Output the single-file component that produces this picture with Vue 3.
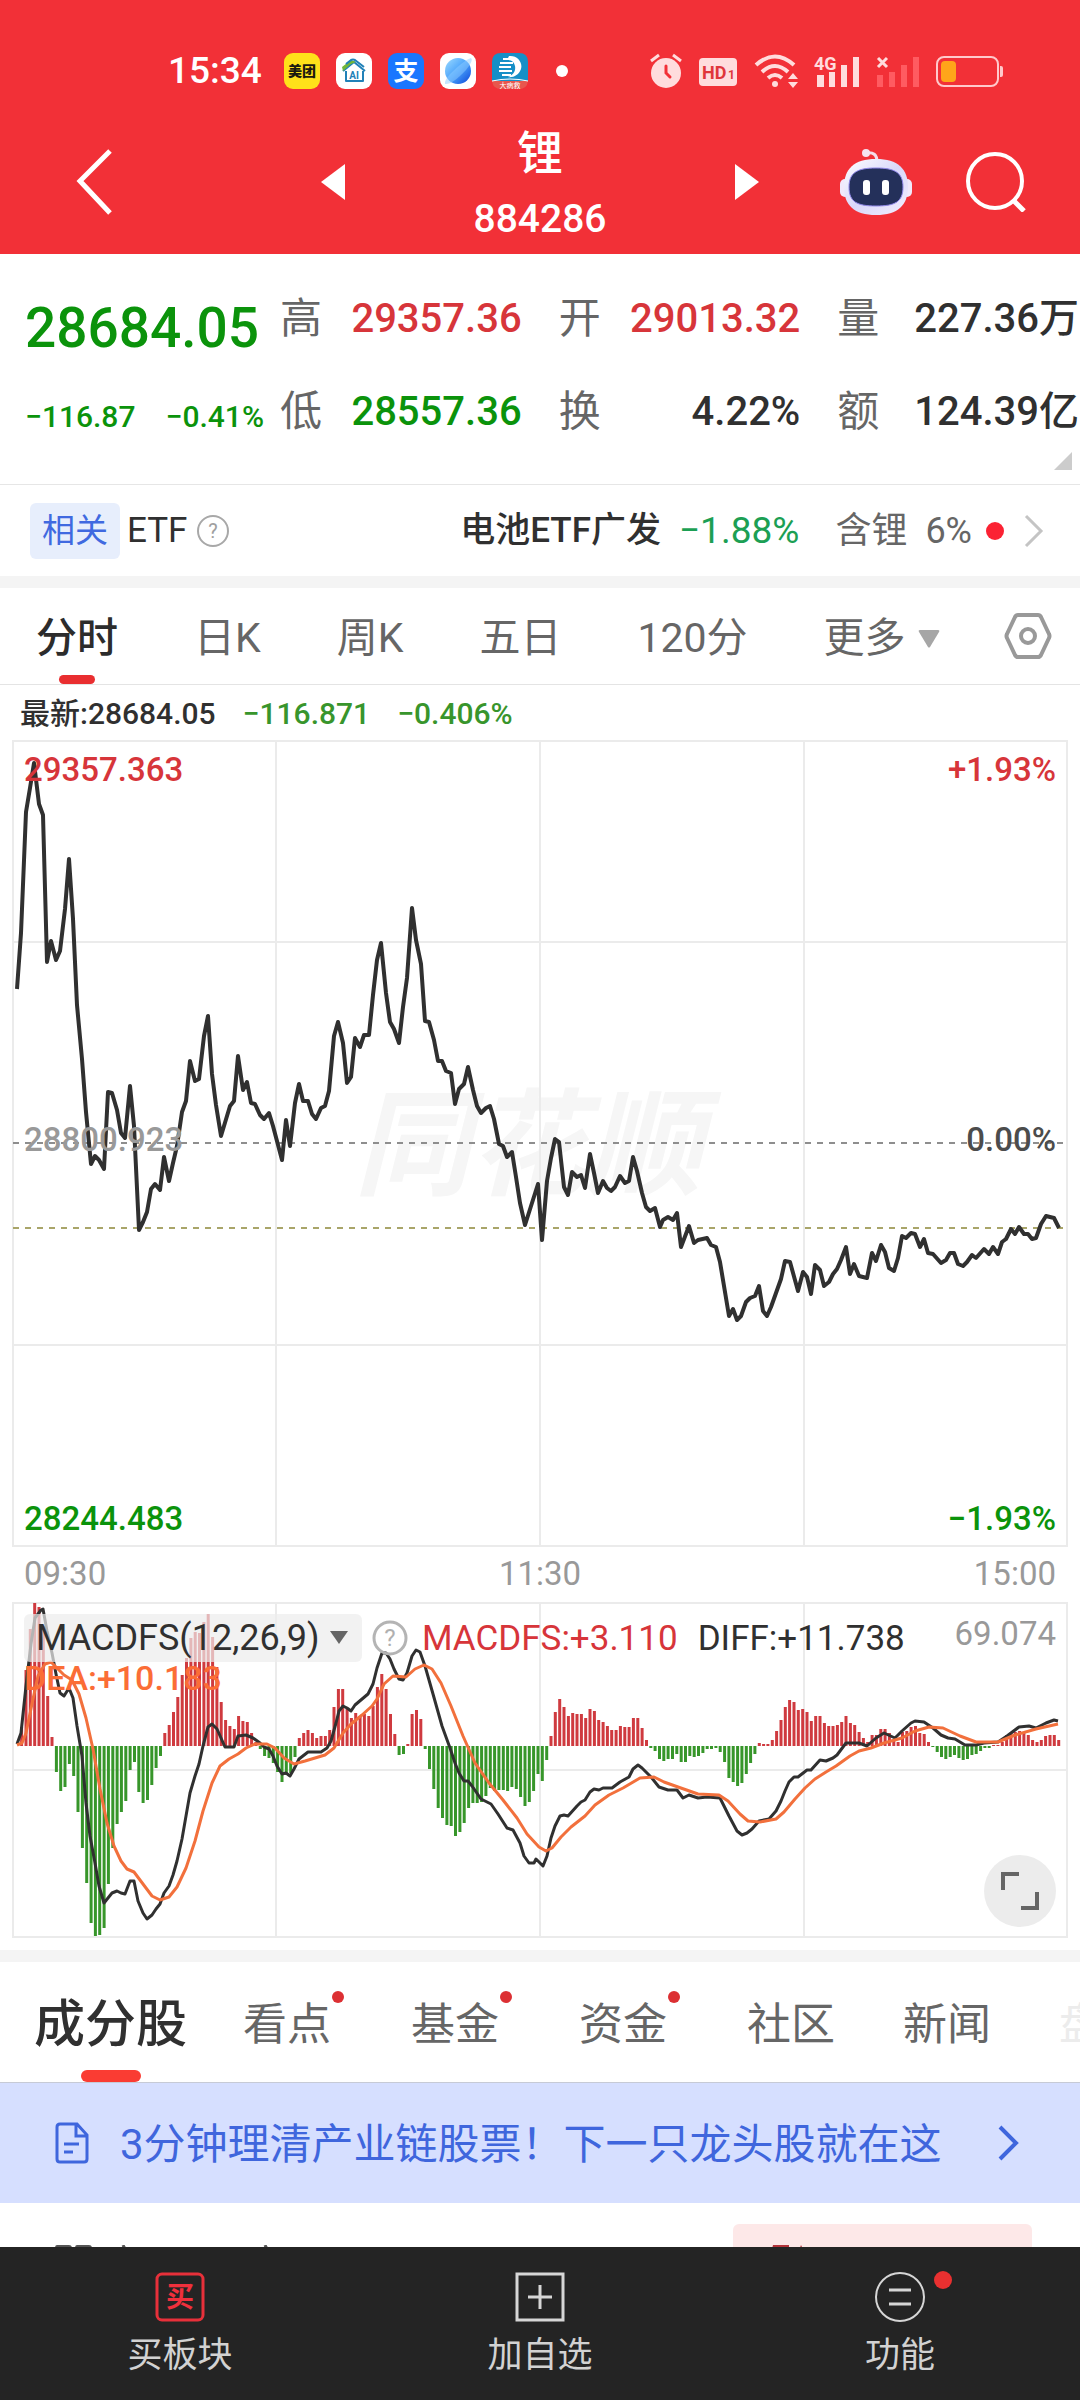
<template>
  <div class="page">
    <header class="top">
      <div class="status">
        <div class="status-left">
          <span class="clock">15:34</span>
          <svg class="app" viewBox="0 0 36 36">
            <rect width="36" height="36" rx="9" fill="#ffe11a" />
            <text x="18" y="23" text-anchor="middle" font-size="14" font-weight="900" fill="#1c1a10">美团</text>
          </svg>
          <svg class="app" viewBox="0 0 36 36">
            <rect width="36" height="36" rx="9" fill="#fff" />
            <path d="M7 18 18 9l11 9M10 18v10h17V18" fill="none" stroke="#2181b8" stroke-width="2" stroke-linejoin="round" />
            <path d="M6 14l9-7 5 2-5 2-8 7z" fill="#72b63a" />
            <path d="M10 11l5-4q2-1 4 0l9 7" fill="none" stroke="#2181b8" stroke-width="2" />
            <text x="18" y="26" text-anchor="middle" font-size="10" font-weight="700" fill="#2181b8">AI</text>
          </svg>
          <svg class="app" viewBox="0 0 36 36">
            <rect width="36" height="36" rx="9" fill="#1a76ff" />
            <text x="18" y="27" text-anchor="middle" font-size="25" font-weight="700" fill="#fff">支</text>
          </svg>
          <svg class="app" viewBox="0 0 36 36">
            <defs>
              <linearGradient id="planet" x1="0" y1="0" x2="1" y2="1">
                <stop offset="0" stop-color="#9fdcff" />
                <stop offset="0.5" stop-color="#4aa3fb" />
                <stop offset="1" stop-color="#0c45d8" />
              </linearGradient>
            </defs>
            <rect width="36" height="36" rx="9" fill="#fff" />
            <circle cx="18" cy="18" r="13" fill="url(#planet)" />
            <path d="M5 31Q4 28 10 21 24 7 31 5q3 2-5 12Q12 32 5 31z" fill="#8ecbff" opacity="0.5" />
          </svg>
          <svg class="app" viewBox="0 0 36 36">
            <path d="M9 0h18q9 0 9 9v19H0V9q0-9 9-9z" fill="#168fc7" />
            <path d="M0 28h36q-1 8-9 8H9q-8 0-9-8z" fill="#e8564d" />
            <path d="M0 28q18-4 36 0" fill="none" stroke="#fff" stroke-width="1" />
            <path d="M17 3c8-1 14 6 12 13-2 6-8 9-13 8 5-2 8-6 7-11-1-4-3-6-8-6z" fill="#fff" />
            <path d="M11 6h10M8 10h13M7 14h12M7 18h13M10 22h9" stroke="#fff" stroke-width="2" />
            <text x="18" y="35" text-anchor="middle" font-size="7" fill="#fff">大病救</text>
          </svg>
          <i class="more-dot"></i>
        </div>
        <div class="status-right">
          <svg width="32" height="36" viewBox="0 0 32 36">
            <circle cx="16" cy="20" r="15" fill="#ffdcdd" />
            <path d="M1 8l8-6M31 8l-8-6" stroke="#ffdcdd" stroke-width="3" />
            <path d="M16 13v7l4 4" fill="none" stroke="#f23037" stroke-width="3" stroke-linecap="round" />
          </svg>
          <svg width="40" height="36" viewBox="0 0 40 36">
            <rect x="1" y="5" width="38" height="28" rx="4" fill="#ffdcdd" />
            <text x="4" y="26" font-size="18" font-weight="700" fill="#e0353b">HD</text>
            <text x="30" y="26" font-size="12" font-weight="700" fill="#e0353b">1</text>
          </svg>
          <svg width="44" height="36" viewBox="0 0 44 36">
            <path d="M2 12Q21-5 40 12M8 19q13-12 26 0M14 25q7-6 14 0" fill="none" stroke="#ffdcdd" stroke-width="4" />
            <circle cx="21" cy="31" r="3" fill="#ffdcdd" />
            <path d="M34 26l5-6 5 6zM34 29l5 6 5-6z" fill="#ffdcdd" />
          </svg>
          <svg width="46" height="36" viewBox="0 0 46 36">
            <path d="M3 22h7v12H3zM15 19h6v15h-6zM27 12h6v22h-6zM39 4h6v30h-6z" fill="#ffdcdd" />
            <text x="0" y="17" font-size="18" font-weight="700" fill="#ffdcdd">4G</text>
          </svg>
          <svg width="44" height="36" viewBox="0 0 44 36">
            <path d="M1 22h6v12H1zM13 19h6v15h-6zM25 12h6v22h-6zM37 4h6v30h-6z" fill="#ff5b61" />
            <path d="M2 5l9 9M11 5l-9 9" stroke="#ffdcdd" stroke-width="3" />
          </svg>
          <svg width="68" height="36" viewBox="0 0 68 36">
            <rect x="1" y="4" width="61" height="29" rx="7" fill="none" stroke="#ffc9cb" stroke-width="2" />
            <rect x="5" y="8" width="15" height="21" rx="4" fill="#ffa51a" />
            <path d="M64 13h1q2 0 2 2v7q0 2-2 2h-1z" fill="#ffc9cb" />
          </svg>
        </div>
      </div>

      <div class="nav">
        <button class="back" aria-label="返回">
          <svg width="38" height="68" viewBox="0 0 38 68">
            <path d="M35 3 5 33l30 32" fill="none" stroke="#fff" stroke-width="5" />
          </svg>
        </button>
        <div class="nav-center">
          <button aria-label="上一个">
            <svg width="24" height="36" viewBox="0 0 24 36"><path d="M24 0v36L0 18z" fill="#fff" /></svg>
          </button>
          <h1 class="title">锂<small>884286</small></h1>
          <button aria-label="下一个">
            <svg width="24" height="36" viewBox="0 0 24 36"><path d="M0 0v36l24-18z" fill="#fff" /></svg>
          </button>
        </div>
        <div class="nav-right">
          <button aria-label="智能助手">
            <svg width="72" height="66" viewBox="0 0 72 66">
              <defs>
                <linearGradient id="head" x1="0" y1="0" x2="1" y2="1">
                  <stop offset="0" stop-color="#ffffff" />
                  <stop offset="0.5" stop-color="#d9d8fa" />
                  <stop offset="1" stop-color="#f3eefd" />
                </linearGradient>
              </defs>
              <path d="M26 4q11-2 11 9" fill="none" stroke="#f4dcea" stroke-width="3" />
              <circle cx="26" cy="4" r="4" fill="#f6e3ef" />
              <rect x="0" y="30" width="10" height="18" rx="5" fill="#f1e9fb" />
              <rect x="62" y="30" width="10" height="18" rx="5" fill="#f1e9fb" />
              <path d="M36 10c22 0 32 10 32 28S58 66 36 66 4 56 4 38s10-28 32-28z" fill="url(#head)" />
              <path d="M36 19c18 0 27 4 27 19s-8 19-27 19S9 53 9 38s9-19 27-19z" fill="#24305a" stroke="#8f86e8" stroke-width="1" />
              <rect x="23" y="31" width="7" height="15" rx="3" fill="#fff" />
              <rect x="42" y="31" width="7" height="15" rx="3" fill="#fff" />
            </svg>
          </button>
          <button aria-label="搜索">
            <svg width="60" height="60" viewBox="0 0 60 60">
              <circle cx="29" cy="29" r="27" fill="none" stroke="#fff" stroke-width="4" />
              <path d="M47 48l11 11" stroke="#fff" stroke-width="5" />
            </svg>
          </button>
        </div>
      </div>
    </header>

    <section class="quote">
      <div class="price">
        <strong>28684.05</strong>
        <p><span>−116.87</span><span>−0.41%</span></p>
      </div>
      <dl class="stats">
        <div v-for="s in stats" :key="s.label" class="stat">
          <dt>{{ s.label }}</dt>
          <dd :class="s.tone">{{ s.value }}</dd>
        </div>
      </dl>
      <i class="corner"></i>
    </section>

    <section class="etf">
      <span class="tag">相关</span>
      <span class="etf-title">ETF</span>
      <svg width="32" height="32" viewBox="0 0 32 32">
        <circle cx="16" cy="16" r="15" fill="none" stroke="#a8a8a8" stroke-width="2" />
        <text x="16" y="23" text-anchor="middle" font-size="20" fill="#a0a0a0">?</text>
      </svg>
      <a href="#" class="etf-name">电池ETF广发</a>
      <span class="etf-change">−1.88%</span>
      <span class="etf-ratio"><span>含锂</span><span>6%</span></span>
      <i class="etf-dot"></i>
      <svg width="20" height="34" viewBox="0 0 20 34">
        <path d="M2 2l15 15L2 32" fill="none" stroke="#c4c4c4" stroke-width="3" />
      </svg>
    </section>

    <nav class="periods">
      <button v-for="p in periods" :key="p" :class="{ active: p === period }" @click="period = p">{{ p }}</button>
      <button>更多
        <svg width="22" height="18" viewBox="0 0 22 18"><path d="M2 0h18q2 0 1 2l-9 15q-1 1-2 0L1 2q-1-2 1-2z" fill="#a6a6a6" /></svg>
      </button>
      <button aria-label="设置" class="gear">
        <svg width="48" height="46" viewBox="0 0 48 46">
          <path d="M14 2h20q2 0 3 2l8 17q1 2 0 4l-8 17q-1 2-3 2H14q-2 0-3-2L3 25q-1-2 0-4l8-17q1-2 3-2z" fill="none" stroke="#999" stroke-width="4" />
          <circle cx="24" cy="23" r="7" fill="none" stroke="#999" stroke-width="4" />
        </svg>
      </button>
    </nav>

    <p class="latest">
      <span>最新:28684.05</span>
      <span class="down-soft">−116.871</span>
      <span class="down-soft">−0.406%</span>
    </p>

    <section class="chart">
      <svg viewBox="0 0 1080 807">
        <text class="watermark" x="528" y="446" text-anchor="middle">同花顺</text>
        <path class="grid" d="M13 1H1067V806H13ZM276 1V806M540 1V806M804 1V806M13 202H1067M13 605H1067" />
        <path d="M13 403H1067" stroke="#8e8e8e" stroke-width="2" stroke-dasharray="6 6" />
        <path d="M13 488H1067" stroke="#a9a569" stroke-width="2" stroke-dasharray="6 6" />
        <polyline class="price-line" :points="priceLine" />
      </svg>
      <span class="mark t l up">29357.363</span>
      <span class="mark t r up">+1.93%</span>
      <span class="mark m l flat">28800.923</span>
      <span class="mark m r zero">0.00%</span>
      <span class="mark b l down">28244.483</span>
      <span class="mark b r down">−1.93%</span>
    </section>
    <div class="times"><span>09:30</span><span>11:30</span><span>15:00</span></div>

    <section class="macd">
      <svg viewBox="0 0 1080 336">
        <path class="grid" d="M13 1H1067V335H13ZM276 1V335M540 1V335M804 1V335M13 168H1067" />
        <rect
          v-for="(h, i) in bars"
          :key="i"
          :x="barX(i)"
          :y="h > 0 ? ZERO - h : ZERO"
          width="3"
          :height="Math.abs(h)"
          :fill="h > 0 ? '#cf3a3f' : '#37962a'"
        />
        <polyline class="diff-line" :points="diffLine" />
        <polyline class="dea-line" :points="deaLine" />
      </svg>
      <div class="legend">
        <label class="indicator">
          <select aria-label="指标"><option>MACDFS(12,26,9)</option></select>
          <svg width="20" height="14" viewBox="0 0 20 14"><path d="M1 0h18L10 13z" fill="#666" /></svg>
        </label>
        <svg width="36" height="36" viewBox="0 0 36 36">
          <circle cx="18" cy="18" r="16" fill="none" stroke="#b4b4b4" stroke-width="3" />
          <text x="18" y="26" text-anchor="middle" font-size="24" fill="#b0b0b0">?</text>
        </svg>
        <span class="legend-values"><span class="up">MACDFS:+3.110</span><span>DIFF:+11.738</span></span>
      </div>
      <span class="dea">DEA:+10.183</span>
      <span class="scale">69.074</span>
      <button class="expand" aria-label="全屏">
        <svg width="38" height="38" viewBox="0 0 38 38">
          <path d="M2 18V2h16M36 20v16H20" fill="none" stroke="#666" stroke-width="4" />
        </svg>
      </button>
    </section>

    <nav class="subtabs">
      <button
        v-for="t in subtabs"
        :key="t.name"
        :class="{ active: t.name === subtab, dot: t.dot, faint: t.faint }"
        @click="subtab = t.name"
      >{{ t.name }}</button>
    </nav>

    <a href="#" class="banner">
      <svg width="34" height="42" viewBox="0 0 34 42">
        <path d="M22 2H5Q2 2 2 5v32q0 3 3 3h24q3 0 3-3V13zM21 3v11h10M9 22h15M9 30h9" fill="none" stroke="#3f66dd" stroke-width="3" />
      </svg>
      <span>3分钟理清产业链股票！下一只龙头股就在这</span>
      <svg width="22" height="36" viewBox="0 0 22 36">
        <path d="M2 2l16 16L2 34" fill="none" stroke="#3f66dd" stroke-width="4" />
      </svg>
    </a>

    <section class="list">
      <svg class="list-icons" width="220" height="36" viewBox="0 0 220 36">
        <path d="M2 0h12q3 0 3 3v14H0V3q0-3 2-3zM22 0h12q3 0 3 3v14H20V3q0-3 2-3z" fill="#555" />
        <path d="M68 0l3 6M210 0l3 6" stroke="#555" stroke-width="3" />
      </svg>
      <div class="pink">
        <svg width="40" height="36" viewBox="0 0 40 36">
          <path d="M2 0h16v8H0zM30 0l4 8h-7z" fill="#b3333a" />
        </svg>
      </div>
    </section>

    <footer class="bottom">
      <button>
        <svg width="50" height="50" viewBox="0 0 50 50">
          <rect x="2" y="2" width="46" height="46" rx="5" fill="none" stroke="#e8303a" stroke-width="3" />
          <text x="25" y="35" text-anchor="middle" font-size="28" font-weight="700" fill="#f0303c">买</text>
        </svg>
        买板块
      </button>
      <button>
        <svg width="50" height="50" viewBox="0 0 50 50">
          <path d="M2 2h46v46H2zM25 13v24M13 25h24" fill="none" stroke="#d6d6d6" stroke-width="3" />
        </svg>
        加自选
      </button>
      <button class="func">
        <svg width="50" height="50" viewBox="0 0 50 50">
          <circle cx="25" cy="25" r="24" fill="none" stroke="#d6d6d6" stroke-width="2" />
          <path d="M14 18h22M14 32h22" stroke="#d6d6d6" stroke-width="3" />
        </svg>
        功能
      </button>
    </footer>
  </div>
</template>

<script setup>
import { ref } from "vue";

const ZERO = 144;

const stats = [
  { label: "高", value: "29357.36", tone: "up" },
  { label: "开", value: "29013.32", tone: "up" },
  { label: "量", value: "227.36万" },
  { label: "低", value: "28557.36", tone: "down" },
  { label: "换", value: "4.22%" },
  { label: "额", value: "124.39亿" },
];

const periods = ["分时", "日K", "周K", "五日", "120分"];
const period = ref("分时");

const subtabs = [
  { name: "成分股" },
  { name: "看点", dot: true },
  { name: "基金", dot: true },
  { name: "资金", dot: true },
  { name: "社区" },
  { name: "新闻" },
  { name: "盘", faint: true },
];
const subtab = ref("成分股");

const priceLine =
  "17,249 21,193 26,72 30,48 34,23 39,64 43,75 47,222 51,201 56,220 60,211 65,169 69,119 73,179 77,265 82,319 86,372 91,424 95,416 99,420 104,429 " +
  "108,352 112,353 117,370 121,393 125,398 130,346 134,386 139,490 143,482 147,472 151,449 155,444 160,450 164,417 169,441 173,423 177,406 182,372 186,361 " +
  "190,321 195,341 199,339 204,296 208,276 212,334 216,365 221,396 230,366 234,361 238,316 243,350 247,342 251,363 255,364 260,375 264,379 269,373 273,386 " +
  "282,420 286,380 290,406 295,363 299,344 303,361 308,361 312,374 316,379 321,368 325,366 329,351 334,296 338,282 343,303 347,343 351,337 355,298 360,307 " +
  "364,295 369,295 373,255 377,220 381,203 386,253 390,282 394,289 399,303 403,267 407,238 412,168 416,200 421,224 425,281 429,282 434,300 438,321 442,321 " +
  "446,331 451,333 455,364 459,349 464,344 468,327 473,350 477,366 481,373 486,368 490,366 494,379 499,404 503,406 507,417 512,412 516,437 520,463 525,485 " +
  "538,444 542,500 547,441 551,418 555,399 559,402 564,447 568,455 572,432 577,437 581,435 585,448 590,414 594,433 598,453 603,441 607,448 611,451 615,447 " +
  "620,436 625,443 629,441 633,417 637,431 642,453 646,467 650,471 655,468 660,487 663,480 668,477 673,480 677,473 681,507 689,486 694,503 698,500 707,498 " +
  "711,505 716,507 720,522 729,576 733,569 737,580 741,576 746,562 750,558 755,556 759,546 763,571 767,576 771,567 781,539 785,521 790,522 798,551 803,532 " +
  "807,537 811,554 815,525 820,530 824,546 829,542 833,534 837,529 841,520 846,507 850,534 854,524 859,536 867,538 872,513 876,521 881,505 885,512 889,528 " +
  "894,531 898,518 902,496 906,498 911,493 915,494 920,507 924,499 928,513 933,514 941,523 946,520 950,513 954,513 958,524 963,526 967,522 972,515 976,518 " +
  "984,509 989,514 993,507 998,514 1002,502 1006,499 1011,489 1015,494 1019,487 1024,494 1028,494 1032,499 1036,498 1041,484 1046,476 1054,478 1059,488";

const diffLine =
  "17,142 21,131 26,84 31,42 35,16 41,8 43,7 47,29 52,51 56,72 60,91 64,94 69,86 73,96 77,124 82,154 86,201 90,234 95,261 99,284 104,301 108,296 112,291 " +
  "117,289 121,291 125,292 130,279 134,279 138,299 143,311 147,317 152,313 156,307 160,302 164,291 169,284 173,273 177,259 182,237 186,214 190,191 195,174 " +
  "199,162 203,144 208,125 212,122 217,127 221,136 225,145 234,145 238,134 246,133 253,136 260,141 264,145 269,147 273,154 277,164 282,172 286,171 290,174 " +
  "294,167 299,157 308,150 321,150 327,146 331,139 336,121 339,109 343,104 347,106 351,109 355,103 368,92 373,82 377,66 382,51 386,51 390,57 394,67 399,77 " +
  "403,78 407,71 412,54 416,48 420,50 425,64 433,92 442,124 450,146 455,161 459,171 464,179 468,179 472,184 481,197 491,202 498,212 507,226 513,228 520,241 " +
  "524,254 529,261 534,261 536,257 543,264 547,254 551,236 555,224 560,214 564,213 568,214 577,204 581,200 585,198 590,190 594,187 599,188 603,186 612,186 " +
  "616,183 620,180 629,175 633,167 638,163 642,166 651,175 659,185 668,188 677,188 683,196 689,193 698,196 707,195 720,196 729,214 737,229 742,233 747,231 " +
  "752,227 759,219 769,217 776,209 781,199 785,189 789,180 794,175 798,175 807,168 811,168 820,158 826,159 833,156 837,153 846,141 859,141 867,144 876,136 " +
  "884,131 895,136 902,129 911,121 915,119 924,120 933,126 941,133 948,136 955,137 965,143 976,143 984,141 998,140 1007,134 1019,125 1029,124 1036,126 " +
  "1046,121 1054,118 1058,119";

const deaLine =
  "17,143 22,141 26,131 33,97 38,74 45,62 51,60 57,66 64,73 72,78 79,92 86,116 93,147 100,187 107,221 114,244 121,259 127,267 134,270 143,282 152,294 " +
  "160,298 169,295 177,285 186,266 195,239 203,209 212,181 220,164 229,157 238,152 246,146 255,142 267,142 275,146 284,156 294,162 305,159 315,156 325,153 " +
  "334,146 343,131 351,122 362,113 372,104 377,97 384,82 393,74 406,75 415,67 424,63 432,67 441,81 451,104 463,134 475,161 489,181 503,198 517,216 527,232 " +
  "539,245 546,249 552,246 561,235 571,225 585,214 595,203 609,193 623,186 640,176 654,175 664,180 678,185 698,192 719,193 728,199 740,212 748,219 760,220 " +
  "776,217 784,210 795,197 805,186 815,177 826,170 836,164 850,154 859,149 871,146 884,141 902,136 915,129 929,125 943,126 960,134 976,140 998,140 1015,133 " +
  "1036,127 1058,122";

// one bar per minute, positive above the zero line
const bars = [
  0, 19, 76, 117, 143, 139, 120, 50, 9, -26, -45, -41, -18, -30, -66, -102, -137, -177, -190, -189,
  -182, -138, -102, -78, -66, -55, -24, -16, -46, -57, -54, -39, -22, -10, 13, 21, 34, 49, 71, 88,
  108, 114, 113, 124, 132, 109, 79, 44, 26, 20, 17, 30, 25, 24, 13, 4, -3, -10, -12, -17,
  -26, -36, -29, -27, -11, 8, 13, 16, 13, 8, 10, 10, 16, 39, 57, 57, 37, 28, 33, 30,
  32, 30, 40, 59, 72, 57, 32, 12, -9, -8, 2, 32, 36, 27, -3, -23, -43, -62, -72, -79,
  -80, -90, -86, -77, -62, -57, -57, -56, -50, -42, -45, -44, -44, -45, -41, -43, -51, -60, -56, -45,
  -28, -35, -14, 10, 34, 47, 39, 30, 33, 32, 32, 28, 37, 35, 26, 24, 20, 16, 16, 20,
  19, 19, 28, 28, 18, 6, -2, -5, -13, -15, -13, -13, -8, -16, -16, -10, -11, -10, -7, -3,
  -3, -2, -6, -16, -32, -36, -40, -37, -28, -17, -8, 3, 2, 2, 6, 15, 26, 39, 46, 44,
  36, 37, 34, 25, 30, 30, 23, 20, 20, 21, 24, 30, 23, 21, 14, 8, 4, 11, 11, 17,
  17, 13, 5, 4, 14, 15, 19, 20, 13, 12, 4, -1, -6, -11, -13, -11, -9, -12, -14, -13,
  -9, -8, -5, -2, -2, 1, 1, 4, 11, 13, 14, 15, 14, 11, 6, 4, 6, 10, 11, 11, 6,
];

function barX(i) {
  return (15.8 + i * 4.339).toFixed(1);
}
</script>

<style>
body {
  margin: 0;
  background: #fff;
}
</style>

<style scoped>
.page {
  display: flex;
  flex-direction: column;
  height: 100vh;
  overflow: hidden;
  background: #fff;
  color: #303030;
  font-family: Roboto, "Noto Sans CJK SC", sans-serif;
  line-height: 1.2;
}

button {
  padding: 0;
  border: none;
  background: none;
  font: inherit;
  color: inherit;
  cursor: pointer;
}

svg {
  display: block;
  flex: none;
}

a {
  color: inherit;
  text-decoration: none;
}

.up { color: #d7353a; }
.down { color: #0b930b; }
.down-soft { color: #38952c; }

.top {
  flex: none;
  background: #f23037;
  color: #fff;
}

.status {
  display: flex;
  justify-content: space-between;
  align-items: center;
  height: 72px;
  padding: 35px 76px 3px 168px;
}

.status-left,
.status-right {
  display: flex;
  align-items: center;
  gap: 16px;
}

.clock {
  margin-right: 6px;
  font-size: 37px;
  font-weight: 500;
}

.app {
  width: 36px;
  height: 36px;
}

.more-dot {
  width: 12px;
  height: 12px;
  margin-left: 12px;
  border-radius: 50%;
  background: #fff;
}

.nav {
  display: grid;
  grid-template-columns: 1fr 438px 1fr;
  align-items: center;
  height: 144px;
}

.back {
  justify-self: start;
  margin-left: 75px;
}

.nav-center {
  display: flex;
  justify-content: space-between;
  align-items: center;
}

.title {
  display: flex;
  flex-direction: column;
  align-items: center;
  margin: 0;
  padding-top: 8px;
  font-size: 46px;
  font-weight: 500;
  line-height: 66px;
}

.title small {
  font-size: 39px;
}

.nav-right {
  display: flex;
  justify-content: flex-end;
  align-items: center;
  gap: 54px;
  padding-right: 54px;
}

.quote {
  position: relative;
  flex: none;
  display: flex;
  gap: 16px;
  height: 231px;
  border-bottom: 1px solid #e6e6e6;
  box-sizing: border-box;
}

.price {
  width: 239px;
  padding: 42px 0 0 25px;
  color: #0b930b;
  white-space: nowrap;
}

.price strong {
  display: block;
  font-size: 55px;
  font-weight: 500;
  line-height: 64px;
}

.price p {
  display: flex;
  justify-content: space-between;
  margin: 35px 0 0;
  font-size: 30px;
  font-weight: 500;
  line-height: 44px;
}

.stats {
  flex: 1;
  display: grid;
  grid-template-columns: repeat(3, 1fr);
  grid-auto-rows: 93px;
  column-gap: 37px;
  margin: 18px 1px 0 0;
}

.stat {
  display: flex;
  justify-content: space-between;
  align-items: center;
  font-size: 40px;
  line-height: 48px;
  white-space: nowrap;
}

.stat dt {
  color: #666;
  font-size: 42px;
}

.stat dd {
  margin: 0;
  font-weight: 500;
}

.corner {
  position: absolute;
  right: 8px;
  bottom: 14px;
  border-left: 18px solid transparent;
  border-bottom: 18px solid #ccc;
}

.etf {
  flex: none;
  display: flex;
  align-items: center;
  height: 91px;
  padding: 0 36px 0 30px;
  border-bottom: 12px solid #f4f4f4;
  font-size: 35px;
  line-height: 56px;
}

.tag {
  padding: 0 12px;
  border-radius: 6px;
  background: #e7eefc;
  color: #4069e0;
  font-size: 33px;
}

.etf-title {
  margin: 0 10px 0 7px;
}

.etf-name {
  margin-left: auto;
  font-weight: 500;
}

.etf-change {
  margin: 0 36px 0 18px;
  color: #1c9f54;
  font-size: 37px;
}

.etf-ratio {
  display: flex;
  gap: 18px;
  color: #666;
  font-size: 36px;
}

.etf-dot {
  width: 18px;
  height: 18px;
  margin: 0 20px 0 14px;
  border-radius: 50%;
  background: #fb2233;
}

.periods {
  flex: none;
  display: flex;
  gap: 76px;
  height: 96px;
  padding: 0 36px;
  border-bottom: 1px solid #e4e4e4;
  color: #666;
  font-size: 41px;
  white-space: nowrap;
}

.periods button {
  position: relative;
  display: flex;
  align-items: center;
  gap: 12px;
  padding-top: 6px;
}

.periods .gear {
  margin-left: auto;
  padding-top: 0;
}

.periods .gear {
  flex: none;
  margin-left: -12px;
}

.periods .active {
  color: #2c2c2c;
  font-weight: 500;
}

.periods .active::after {
  content: "";
  position: absolute;
  left: 50%;
  bottom: 0;
  width: 36px;
  height: 9px;
  margin-left: -18px;
  border-radius: 5px;
  background: #e92e30;
}

.latest {
  flex: none;
  display: flex;
  gap: 27px;
  margin: 0;
  padding: 2px 0 0 20px;
  font-size: 30px;
  font-weight: 500;
  line-height: 53px;
}

.chart,
.macd {
  position: relative;
  flex: none;
}

.chart > svg,
.macd > svg {
  width: 100%;
  height: auto;
}

.grid {
  fill: none;
  stroke: #ebebeb;
  stroke-width: 2;
}

.watermark {
  fill: #f6f6f6;
  font-size: 116px;
  font-style: italic;
  font-weight: 700;
}

.price-line,
.diff-line,
.dea-line {
  fill: none;
  stroke: #303030;
  stroke-width: 4;
  stroke-linejoin: round;
}

.diff-line,
.dea-line {
  stroke-width: 3;
}

.dea-line {
  stroke: #f2703c;
}

.mark {
  position: absolute;
  font-size: 33px;
  font-weight: 500;
  line-height: 40px;
}

.mark.l { left: 24px; }
.mark.r { right: 24px; }
.mark.t { top: 10px; }
.mark.m { top: 380px; }
.mark.b { bottom: 8px; }
.flat { color: #999; }
.zero { color: #4c4c4c; }

.times {
  flex: none;
  display: flex;
  justify-content: space-between;
  padding: 0 24px 2px;
  color: #999;
  font-size: 33px;
  line-height: 53px;
}

.macd {
  border-bottom: 12px solid #f4f4f4;
  padding-bottom: 12px;
}

.legend {
  position: absolute;
  left: 24px;
  top: 12px;
  display: flex;
  align-items: center;
  gap: 10px;
  font-size: 35px;
  white-space: nowrap;
}

.legend-values {
  display: flex;
  gap: 20px;
  padding: 2px 0 0 4px;
}

.indicator {
  position: relative;
  display: flex;
  align-items: center;
  width: 338px;
  height: 48px;
  border-radius: 6px;
  background: rgba(236, 236, 236, 0.7);
}

.indicator select {
  width: 100%;
  height: 100%;
  padding: 2px 0 0 12px;
  border: none;
  background: transparent;
  color: #303030;
  font: inherit;
  font-size: 36px;
  appearance: none;
}

.indicator svg {
  position: absolute;
  right: 13px;
}

.dea,
.scale {
  position: absolute;
  font-size: 34px;
  line-height: 40px;
}

.dea {
  left: 24px;
  top: 56px;
  color: #fb6d36;
  font-weight: 500;
}

.scale {
  right: 24px;
  top: 12px;
  color: #999;
  font-size: 33px;
}

.expand {
  position: absolute;
  right: 24px;
  bottom: 23px;
  display: flex;
  align-items: center;
  justify-content: center;
  width: 72px;
  height: 72px;
  border-radius: 50%;
  background: #ececec;
}

.subtabs {
  flex: none;
  display: flex;
  gap: 56px;
  height: 120px;
  padding-left: 34px;
  border-bottom: 1px solid #c6cad6;
  overflow: hidden;
  color: #666;
  font-size: 44px;
  white-space: nowrap;
}

.subtabs button {
  position: relative;
  flex: none;
  padding: 6px 12px 0 0;
}

.subtabs .dot {
  padding-right: 24px;
}

.subtabs .dot::before {
  content: "";
  position: absolute;
  top: 29px;
  right: 11px;
  width: 12px;
  height: 12px;
  border-radius: 50%;
  background: #dc3033;
}

.subtabs .faint {
  color: #ececec;
}

.subtabs .active {
  padding-right: 0;
  color: #303030;
  font-size: 51px;
  font-weight: 500;
}

.subtabs .active::after {
  content: "";
  position: absolute;
  left: 50%;
  bottom: 0;
  width: 60px;
  height: 12px;
  margin-left: -30px;
  border-radius: 6px;
  background: #fa3c33;
}

.banner {
  flex: none;
  display: flex;
  align-items: center;
  height: 120px;
  padding: 0 60px 0 55px;
  background: #d6dfff;
  color: #3f66dd;
  font-size: 42px;
}

.banner span {
  flex: 1;
  padding: 4px 0 0 31px;
  white-space: nowrap;
}

.list {
  flex: 1;
  display: flex;
  justify-content: space-between;
  min-height: 0;
  padding: 21px 48px 0 55px;
  overflow: hidden;
}

.list-icons {
  margin-top: 21px;
}

.pink {
  width: 299px;
  height: 80px;
  padding: 21px 0 0 38px;
  border-radius: 6px;
  background: #fde8e8;
  box-sizing: border-box;
}

.bottom {
  flex: none;
  display: flex;
  height: 153px;
  background: #242424;
  color: #d2d2d2;
  font-size: 35px;
  line-height: 48px;
}

.bottom button {
  position: relative;
  flex: 1;
  display: flex;
  flex-direction: column;
  align-items: center;
  gap: 10px;
  padding-top: 25px;
}

.func::after {
  content: "";
  position: absolute;
  top: 24px;
  left: 50%;
  width: 18px;
  height: 18px;
  margin-left: 34px;
  border-radius: 50%;
  background: #e93030;
}
</style>
